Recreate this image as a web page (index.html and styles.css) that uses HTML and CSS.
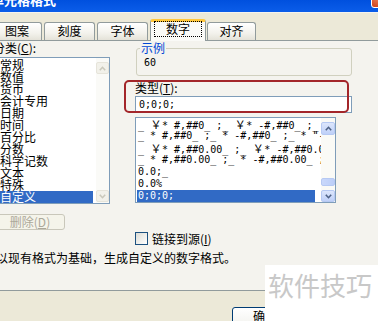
FILE: index.html
```html
<!DOCTYPE html>
<html lang="zh-CN">
<head>
<meta charset="utf-8">
<title>单元格格式</title>
<link rel="stylesheet" href="styles.css">
</head>
<body>
<div class="titlebar"><span class="title">单元格格式</span><span class="close"></span></div>
<div class="tabs">
  <div class="tab t1">图案</div>
  <div class="tab t2">刻度</div>
  <div class="tab t3">字体</div>
  <div class="tab active"><span class="focus">数字</span></div>
  <div class="tab t5">对齐</div>
</div>
<div class="panel">
  <div class="cols">
    <div class="left">
      <div class="lbl cat-lbl">分类(<u>C</u>):</div>
      <div class="listbox cat">
        <div class="items">
          <div class="item">常规</div>
          <div class="item">数值</div>
          <div class="item">货币</div>
          <div class="item">会计专用</div>
          <div class="item">日期</div>
          <div class="item">时间</div>
          <div class="item">百分比</div>
          <div class="item">分数</div>
          <div class="item">科学记数</div>
          <div class="item">文本</div>
          <div class="item">特殊</div>
          <div class="item sel">自定义</div>
        </div>
        <div class="sbar off">
          <div class="sbtn"><svg width="7" height="5" viewBox="0 0 7 5"><path d="M0.8 4.2 L3.5 1.3 L6.2 4.2" fill="none" stroke="currentColor" stroke-width="1.6"/></svg></div>
          <div class="sbtn"><svg width="7" height="5" viewBox="0 0 7 5"><path d="M0.8 0.8 L3.5 3.7 L6.2 0.8" fill="none" stroke="currentColor" stroke-width="1.6"/></svg></div>
        </div>
      </div>
      <div class="btn del">删除(<u>D</u>)</div>
    </div>
    <div class="right">
      <div class="group">
        <div class="legend">示例</div>
        <div class="sample">60</div>
      </div>
      <div class="lbl type-lbl">类型(<u>T</u>):</div>
      <div class="input">0;0;0;</div>
      <div class="listbox fmt">
        <div class="items">
          <div class="item">_ <span class="yen">￥</span>* #,##0_ ;_ <span class="yen">￥</span>* -#,##0_ ;_ <span class="yen">￥</span>* "-"_ ;_ @_ </div>
          <div class="item">_ * #,##0_ ;_ * -#,##0_ ;_ * "-"_ ;_ @_ </div>
          <div class="item">_ <span class="yen">￥</span>* #,##0.00_ ;_ <span class="yen">￥</span>* -#,##0.00_ ;_ </div>
          <div class="item">_ * #,##0.00_ ;_ * -#,##0.00_ ;_ * "-"??_ ;_ @_ </div>
          <div class="item">0.0;_</div>
          <div class="item">0.0%</div>
          <div class="item sel">0;0;0;</div>
        </div>
        <div class="sbar on">
          <div class="sbtn"><svg width="7" height="5" viewBox="0 0 7 5"><path d="M0.8 4.2 L3.5 1.3 L6.2 4.2" fill="none" stroke="currentColor" stroke-width="1.6"/></svg></div>
          <div class="thumb"></div>
          <div class="sbtn down"><svg width="7" height="5" viewBox="0 0 7 5"><path d="M0.8 0.8 L3.5 3.7 L6.2 0.8" fill="none" stroke="currentColor" stroke-width="1.6"/></svg></div>
        </div>
      </div>
      <div class="check"><span class="box"></span><span>链接到源(<u>I</u>)</span></div>
    </div>
  </div>
  <div class="note">以现有格式为基础，生成自定义的数字格式。</div>
</div>
<div class="footer"><div class="btn ok">确定</div></div>
<div class="annot"></div>
<div class="wm">软件技巧</div>
</body>
</html>
```
FILE: styles.css
```css
* { box-sizing: border-box; margin: 0; padding: 0; }
body {
  width: 378px; height: 321px; overflow: hidden; position: relative;
  background: #ECE9D8; color: #000;
  font: 12px/14px "Noto Sans CJK SC", "Noto Sans CJK JP", sans-serif;
}
u { text-decoration: underline; text-underline-offset: 1px; }

.titlebar {
  height: 13px; display: flex; align-items: flex-end; overflow: hidden;
  background: linear-gradient(#0050DE, #0B5DE9);
  border-bottom: 1px solid #F4F3EE;
}
.title {
  color: #fff; font-weight: bold; font-size: 13px; line-height: 13px;
  margin: 0 0 6px -9px; white-space: nowrap;
}
.close {
  margin-left: auto; margin-right: -14px; margin-bottom: 4px;
  width: 21px; height: 21px; flex: none;
  border: 1px solid #fff; border-radius: 3px;
  background: radial-gradient(circle at 35% 35%, #F2906C, #D44A22 70%);
}

.tabs { display: flex; align-items: flex-end; height: 27px; margin-left: -8px; }
.tab {
  flex: none; height: 18px; margin-right: 2px; text-align: center; line-height: 16px;
  border: 1px solid #919B9C; border-bottom: 0; border-radius: 3px 3px 0 0;
  background: linear-gradient(#FFFFFF, #F3F2EC 60%, #E4E2D8);
}
.t1 { width: 50px; }
.t2, .t3 { width: 51px; }
.t5 { width: 49px; }
.tab.active {
  width: 56px; height: 22px; margin-right: 1px; margin-bottom: -1px;
  position: relative; z-index: 1; line-height: 14px;
  border-top: 3px solid #FFC73C; background: #FAFAF7;
}
.focus { display: inline-block; outline: 1px dotted #000; outline-offset: 0; padding: 0 11px; line-height: 14px; }

.panel {
  height: 251px; background: #F4F3EE;
  border-top: 1px solid #919B9C; border-bottom: 1px solid #919B9C;
}
.cols { display: grid; grid-template-columns: 117px 217px; column-gap: 25px; margin-left: -7px; }
.lbl { height: 14px; line-height: 14px; white-space: nowrap; }
.cat-lbl { margin-bottom: 2px; }

.listbox { display: flex; border: 1px solid #7F9DB9; background: #fff; }
.items { flex: 1; overflow: hidden; }
.item { height: 12px; line-height: 12px; white-space: nowrap; }
.sel { background: #316AC5; color: #fff; }

.cat { margin-left: 3px; width: 114px; height: 147px; }
.cat .items { padding: 1px 3px 0 0; }
.cat .item { padding-left: 3px; }

.sbar { flex: none; display: flex; flex-direction: column; }
.sbtn {
  display: flex; align-items: center; justify-content: center;
  border-radius: 2px;
}
.off { width: 13px; padding: 4px 0 1px; justify-content: space-between; background: #FAFAF7; }
.off .sbtn { height: 12px; border: 1px solid #E6E4DA; background: #F2F1EA; color: #CAC8BB; }
.on { width: 14px; padding: 4px 0 0; background: #FAFAF6; }
.on .sbtn { height: 13px; border: 1px solid #B6C9F3; background: linear-gradient(#DCE6FC, #BFD0F8); color: #4D6185; }
.on .thumb { margin-top: auto; height: 8px; border: 1px solid #B6C9F3; border-radius: 2px; background: linear-gradient(90deg, #C9D8FB, #BCCEF8); }
.on .down { margin-top: 4px; height: 12px; }

.btn { text-align: center; border-radius: 3px; white-space: nowrap; }
.del {
  margin: 10px 0 0 2px; width: 70px; height: 16px; line-height: 14px;
  border: 1px solid #C9C7BA; background: #F5F4EA; color: #ACA899;
}

.group { margin: 7px 0 0 1px; height: 28px; border: 1px solid #D0D0BF; border-radius: 3px; }
.legend {
  width: max-content; margin: -8px 0 0 3px; padding: 0 1px;
  background: #F4F3EE; color: #0046D5; line-height: 14px;
}
.sample { margin-top: 1px; padding-left: 7px; font: 10px/14px "DejaVu Sans Mono", monospace; }
.type-lbl { margin-top: 5px; }
.input {
  margin-top: 1px; height: 17px; padding-left: 3px;
  border: 1px solid #7F9DB9; background: #fff;
  font: 10px/15px "DejaVu Sans Mono", monospace;
}
.fmt { margin-top: 4px; width: 201px; height: 86px; }
.fmt .item {
  margin: 0 6px 0 1px; padding-left: 1px; white-space: pre;
  font: 10px/12px "DejaVu Sans Mono", monospace;
}
.yen { display: inline-block; width: 12px; text-align: center; font: 11px/12px "Noto Sans CJK SC", sans-serif; }

.check { display: flex; align-items: center; gap: 4px; margin-top: 29px; height: 13px; line-height: 13px; white-space: nowrap; }
.box {
  flex: none; width: 13px; height: 13px; border: 1px solid #1C5180;
  background: linear-gradient(135deg, #DCDCD5, #FFFFFF);
}
.note { margin: 6px 0 0 -4px; line-height: 14px; white-space: nowrap; }

.footer { height: 30px; padding: 16px 0 0 232px; }
.ok {
  width: 66px; height: 23px; line-height: 14px; padding-top: 1px;
  border: 1px solid #003C74;
  background: linear-gradient(#FFFFFF, #F3F3EF 80%, #D6D0C5);
}

.annot {
  position: absolute; left: 124px; top: 80px; width: 225px; height: 33px;
  border: 2px solid #A3262A; border-radius: 5px;
}
.wm {
  position: absolute; left: 265px; top: 265px; width: 113px; height: 56px;
  background: #fff; color: #C8C8C8; white-space: nowrap;
  font-size: 26px; line-height: 30px; padding: 5px 0 0 3px;
}
```
